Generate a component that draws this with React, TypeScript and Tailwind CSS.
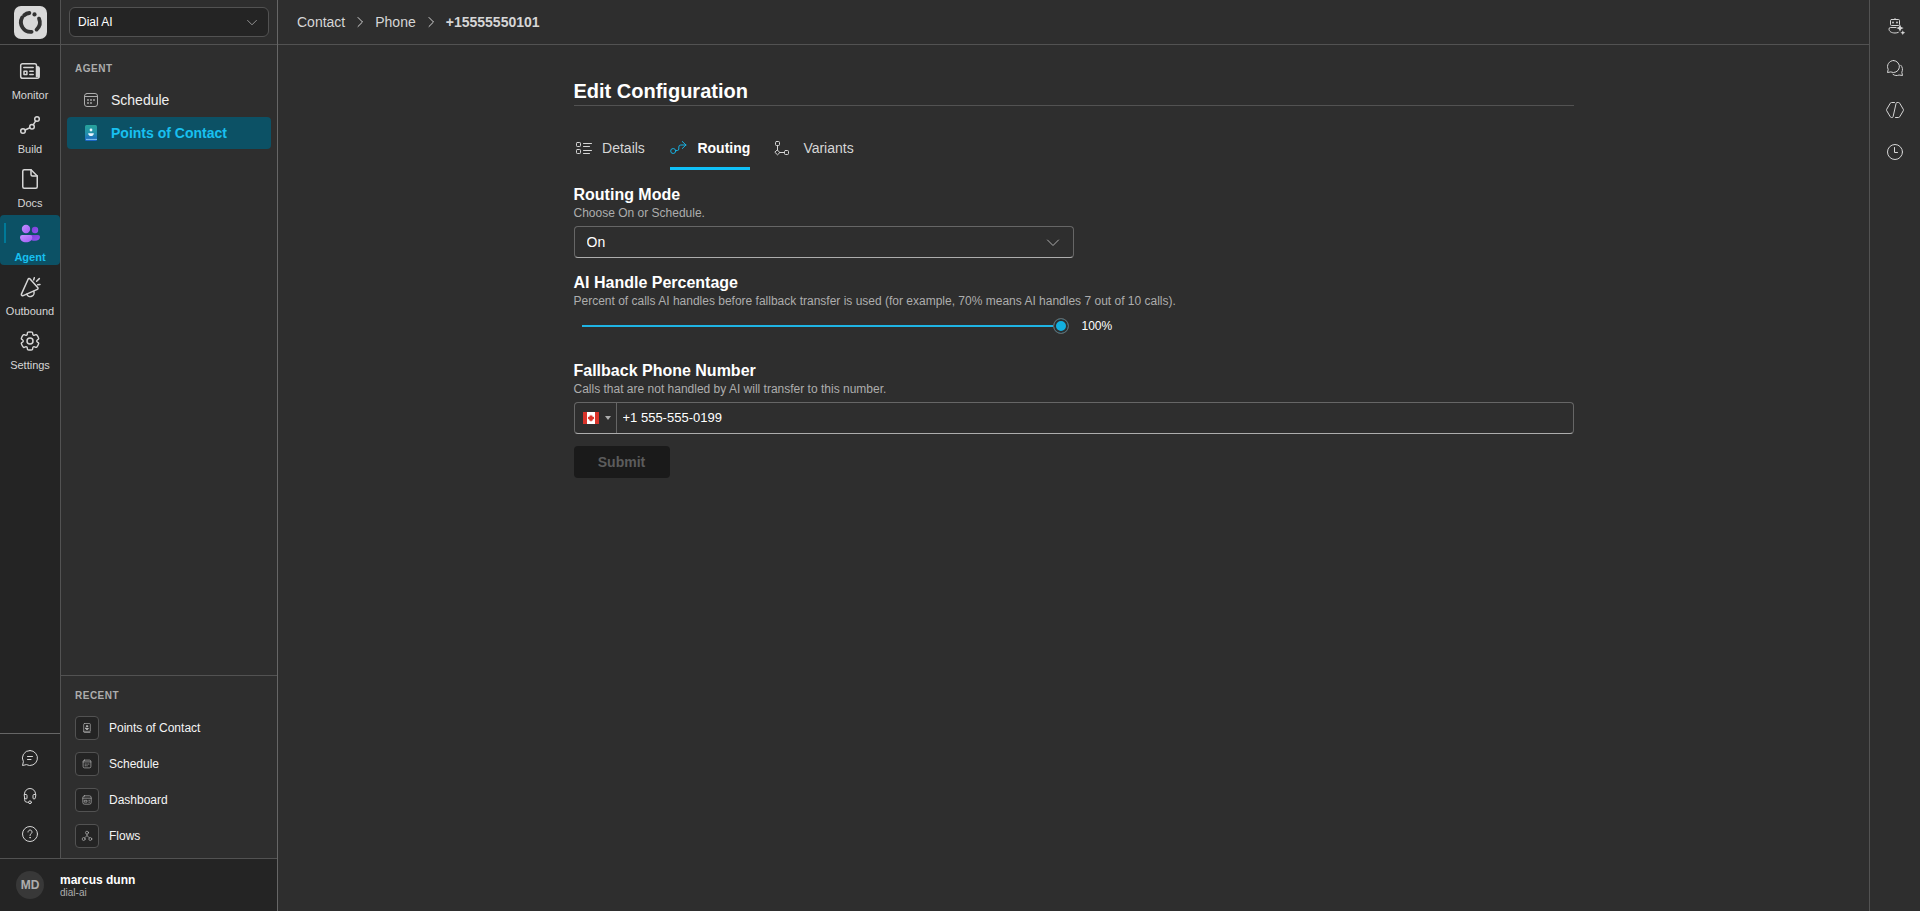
import { useState } from 'react';
import type { ReactNode } from 'react';

interface IconProps {
  className?: string;
}

interface SvgProps extends IconProps {
  box?: number;
  stroke?: number;
  children: ReactNode;
}

function Svg({ className, box = 20, stroke = 1, children }: SvgProps) {
  return (
    <svg
      className={className}
      viewBox={`0 0 ${box} ${box}`}
      fill="none"
      stroke="currentColor"
      strokeWidth={stroke}
      strokeLinecap="round"
      strokeLinejoin="round"
      aria-hidden="true"
    >
      {children}
    </svg>
  );
}

const Logo = ({ className }: IconProps) => (
  <svg className={className} viewBox="0 0 33 33" fill="none" aria-hidden="true">
    <rect width="33" height="33" rx="7" fill="#d9d9d9" />
    <g stroke="#333" strokeWidth="3.8" strokeLinecap="round">
      <path d="M15.4 7A9.7 9.7 0 0 0 10.2 9.2" />
      <path d="M8.2 11.4A9.7 9.7 0 0 0 17.6 25.8" />
      <path d="M25 12.600A9.700 9.700 0 0 1 22.600 23.600" />
    </g>
    <circle cx="20.5" cy="8.4" r="2.1" fill="#333" />
  </svg>
);

const ChevronDown = ({ className }: IconProps) => (
  <Svg className={className}>
    <path d="M4.5 8 10 13.5 15.5 8" />
  </Svg>
);

const ChevronRight = ({ className }: IconProps) => (
  <Svg className={className}>
    <path d="M8 5.500 12.500 10 8 14.500" />
  </Svg>
);

const MonitorIcon = ({ className }: IconProps) => (
  <Svg className={className} box={24} stroke={1.5}>
    <path d="M18.5 17.5V6.2a1.7 1.7 0 0 0-1.7-1.5H4.5a1.8 1.8 0 0 0-1.8 1.8v10.9a2 2 0 0 0 2 1.9h14.5a2 2 0 0 0 2-2V9.3a1.5 1.5 0 0 0-1.3-1.5v9.7" />
    <path d="M5.8 8.5h9.4M11.8 12.2h3.4M11.8 15.5h3.4M6 12.2h2.9v3.3H6z" />
  </Svg>
);

const BuildIcon = ({ className }: IconProps) => (
  <Svg className={className} box={24} stroke={1.5}>
    <circle cx="5" cy="18" r="2.3" />
    <circle cx="14" cy="13.8" r="2.3" />
    <circle cx="19" cy="6" r="2.3" />
    <path d="m7.1 17 4.8-2.2M15.2 11.8l2.5-3.9" />
  </Svg>
);

const DocsIcon = ({ className }: IconProps) => (
  <Svg className={className} box={24} stroke={1.5}>
    <path d="M13 2.75H6.25a1.5 1.5 0 0 0-1.5 1.5v15.5a1.5 1.5 0 0 0 1.5 1.5h11.5a1.5 1.5 0 0 0 1.5-1.5V9z" />
    <path d="M13 2.75V7.5A1.5 1.5 0 0 0 14.5 9h4.75" />
  </Svg>
);

const AgentIcon = ({ className }: IconProps) => (
  <svg className={className} viewBox="0 0 24 24" aria-hidden="true">
    <defs>
      <linearGradient id="people-front" x1="0" y1="0" x2="1" y2="1">
        <stop offset="0" stopColor="#c490ff" />
        <stop offset="1" stopColor="#a25cf5" />
      </linearGradient>
      <linearGradient id="people-back" x1="0" y1="0" x2="1" y2="1">
        <stop offset="0" stopColor="#7a3fd6" />
        <stop offset="1" stopColor="#9455f5" />
      </linearGradient>
    </defs>
    <circle cx="17" cy="9" r="3.2" fill="url(#people-back)" />
    <path d="M12 14h8a2 2 0 0 1 2 2c0 2.4-2.2 3.8-5 3.8S12 19 12 17z" fill="url(#people-back)" />
    <circle cx="8" cy="8" r="4.2" fill="url(#people-front)" />
    <path d="M4.2 14h7.9a2.2 2.2 0 0 1 2.2 2.2c0 3-2.8 5-6.2 5s-6.1-2-6.1-5A2.2 2.2 0 0 1 4.2 14z" fill="url(#people-front)" />
  </svg>
);

const OutboundIcon = ({ className }: IconProps) => (
  <Svg className={className} box={24} stroke={1.5}>
    <path d="M10.1 4.2a1.2 1.2 0 0 1 2-.3l7.6 8.6a1.2 1.2 0 0 1-.4 1.9L5.2 20.6a1.3 1.3 0 0 1-1.8-1.5z" />
    <path d="M8.8 19.2a3.6 3.6 0 0 0 7-2.8" />
    <path d="m16.3 2.7-.6 2.2M21.3 3.6 18.6 6.3M22 9.4l-2.3.4" />
  </Svg>
);

const SettingsIcon = ({ className }: IconProps) => (
  <Svg className={className} box={24} stroke={1.5}>
    <path
      transform="translate(.84 .84) scale(.93)"
      d="M12.01 2.25c.74 0 1.47.1 2.18.25.32.07.55.33.59.65l.17 1.53a1.38 1.38 0 0 0 1.92 1.11l1.4-.61c.3-.13.64-.06.85.17a9.8 9.8 0 0 1 2.2 3.8c.1.3 0 .63-.26.82l-1.25.92a1.38 1.38 0 0 0 0 2.22l1.25.92c.26.19.36.52.27.82a9.8 9.8 0 0 1-2.2 3.8.75.75 0 0 1-.85.17l-1.4-.62a1.38 1.38 0 0 0-1.93 1.12l-.17 1.52a.75.75 0 0 1-.58.65 9.52 9.52 0 0 1-4.4 0 .75.75 0 0 1-.57-.65l-.17-1.52a1.38 1.38 0 0 0-1.93-1.11l-1.4.62a.75.75 0 0 1-.85-.18 9.8 9.8 0 0 1-2.2-3.8c-.1-.3 0-.63.26-.82l1.25-.92a1.38 1.38 0 0 0 0-2.22l-1.24-.92a.75.75 0 0 1-.28-.82 9.8 9.8 0 0 1 2.2-3.8c.23-.23.57-.3.86-.17l1.4.62a1.38 1.38 0 0 0 1.93-1.12l.17-1.53a.75.75 0 0 1 .58-.65c.72-.16 1.45-.24 2.2-.25z"
    />
    <circle cx="12" cy="12" r="3" />
  </Svg>
);

const ChatIcon = ({ className }: IconProps) => (
  <Svg className={className}>
    <path d="M10 2.5a7.5 7.5 0 1 1-3.6 14.1l-3.9.9.9-3.8A7.5 7.5 0 0 1 10 2.5zM7.5 8.5h5M7.5 11.5h3.5" />
  </Svg>
);

const HeadsetIcon = ({ className }: IconProps) => (
  <Svg className={className}>
    <path d="M4.5 8.5V8a5.5 5.5 0 0 1 11 0v.5" />
    <path d="M4.5 8.500H6a1 1 0 0 1 1 1V12a1 1 0 0 1-1 1 1.500 1.500 0 0 1-1.500-1.500zM15.500 8.500H14a1 1 0 0 0-1 1V12a1 1 0 0 0 1 1 1.500 1.500 0 0 0 1.500-1.500z" />
    <path d="M4.500 11.500v2a2.800 2.800 0 0 0 2.800 2.800h1.200" />
    <circle cx="10" cy="16.300" r="1.400" />
  </Svg>
);

const HelpIcon = ({ className }: IconProps) => (
  <Svg className={className}>
    <circle cx="10" cy="10" r="7.5" />
    <path d="M8 8a2 2 0 1 1 3.3 1.5c-.8.6-1.3 1.1-1.3 2" />
    <circle cx="10" cy="13.7" r=".3" />
  </Svg>
);

const CalendarIcon = ({ className }: IconProps) => (
  <Svg className={className}>
    <rect x="3.5" y="3.5" width="13" height="13" rx="2.5" />
    <path d="M3.5 6.5h13" />
    <g fill="currentColor" stroke="none">
      <circle cx="7" cy="10" r=".9" />
      <circle cx="10" cy="10" r=".9" />
      <circle cx="13" cy="10" r=".9" />
      <circle cx="7" cy="13" r=".9" />
      <circle cx="10" cy="13" r=".9" />
    </g>
  </Svg>
);

const ContactIcon = ({ className }: IconProps) => (
  <Svg className={className}>
    <path d="M6 2.5h8A1.5 1.5 0 0 1 15.5 4v11.5h-11M6 2.5A1.5 1.5 0 0 0 4.5 4v12A1.5 1.5 0 0 0 6 17.5h9" />
    <circle cx="10" cy="7" r="1.3" fill="currentColor" />
    <path d="M7.5 10.5h5c0 1.3-1 2-2.5 2s-2.5-.7-2.5-2z" fill="currentColor" />
  </Svg>
);

const ContactColorIcon = ({ className }: IconProps) => (
  <svg className={className} viewBox="0 0 20 20" aria-hidden="true">
    <defs>
      <linearGradient id="contact-fill" x1="0" y1="0" x2="0" y2="1">
        <stop offset="0" stopColor="#27a39b" />
        <stop offset=".5" stopColor="#2391ab" />
        <stop offset="1" stopColor="#1a63c6" />
      </linearGradient>
    </defs>
    <rect x="4" y="2" width="12" height="16" rx="1.5" fill="url(#contact-fill)" />
    <circle cx="10" cy="7" r="1.4" fill="#e8f6ff" />
    <path d="M7.2 10.2h5.6c0 1.9-1.2 2.8-2.8 2.8s-2.8-.9-2.8-2.8z" fill="#e8f6ff" />
    <path d="M5 15.9h11v.9H5z" fill="#8fd0f5" />
  </svg>
);

const DashboardIcon = ({ className }: IconProps) => (
  <Svg className={className}>
    <rect x="3" y="3" width="14" height="14" rx="3" />
    <path d="M3 7h14M6 10.5h4v3H6zM13 10.5h1.5M13 13.5h1.5" />
  </Svg>
);

const FlowIcon = ({ className }: IconProps) => (
  <Svg className={className}>
    <circle cx="10" cy="4.5" r="2.5" />
    <circle cx="4.5" cy="15" r="2.5" />
    <circle cx="15.5" cy="15" r="2.5" />
    <path d="M10 7v2.5M6 13l4-3.5 4 3.5" />
  </Svg>
);

const DetailsIcon = ({ className }: IconProps) => (
  <Svg className={className}>
    <rect x="2.5" y="4.5" width="4" height="4" rx=".8" />
    <rect x="2.5" y="11.5" width="4" height="4" rx=".8" />
    <path d="M9.5 5.500h8M9.500 8.500h6M9.500 12.500h8M9.500 15.500h6" />
  </Svg>
);

const RoutingIcon = ({ className }: IconProps) => (
  <Svg className={className}>
    <circle cx="3.2" cy="13" r="2.5" />
    <path d="M5.8 12.5h1.5A1.5 1.5 0 0 0 8.8 11V9a2 2 0 0 1 2-2H16M12.3 3.5 16 7l-3.7 3.5" />
  </Svg>
);

const VariantsIcon = ({ className }: IconProps) => (
  <Svg className={className}>
    <rect x="1.5" y="3.5" width="4" height="4" rx="1" />
    <rect x="10.5" y="12.5" width="4" height="4" rx="1" />
    <path d="M3.5 7.5v4.7M3.5 12.2 5.9 14.5 3.5 16.8 1.1 14.5zM5.9 14.5h4.6" />
  </Svg>
);

const BotIcon = ({ className }: IconProps) => (
  <Svg className={className}>
    <rect x="5.5" y="3.500" width="9" height="6" rx="1" />
    <path d="M10 3.500v-1M11 11.500H5.500A1.500 1.500 0 0 0 4 13c0 2.500 2.500 4 6 4 1.300 0 2.500-.2 3.300-.6" />
    <g fill="currentColor" stroke="none">
      <circle cx="8" cy="6.500" r=".9" />
      <circle cx="12" cy="6.500" r=".9" />
      <path d="m15 8.500 1.100 2.500 2.500 1.100-2.500 1.100-1.100 2.500-1.100-2.500-2.500-1.100 2.500-1.100zM17.800 14.300l.7 1.700 1.700.7-1.700.7-.7 1.700-.7-1.700-1.700-.7 1.700-.7z" />
    </g>
  </Svg>
);

const ChatsIcon = ({ className }: IconProps) => (
  <Svg className={className}>
    <path d="M8.5 2.5a6 6 0 1 1-2.7 11.4l-3.3.6.7-3.2A6 6 0 0 1 8.500 2.500z" />
    <path d="M8 16.4c1.7 1.3 4 1.5 6 .6l3.5.5-.7-3.2c1.2-2.5.8-5.3-1-7.1" />
  </Svg>
);

const CodeIcon = ({ className }: IconProps) => (
  <Svg className={className}>
    <path d="M9.500 2.500H6.600a1.500 1.500 0 0 0-1.300.7L1.700 9.300a1.500 1.500 0 0 0 0 1.400l3.600 6.100c.3.500.8.700 1.300.7h.5c.5 0 .9-.3 1-.8l3-13.400c.1-.5.5-.8 1-.8h1.300c.5 0 1 .2 1.300.7l3.600 6.100c.3.400.3 1 0 1.400l-3.600 6.100c-.3.500-.8.700-1.300.7h-2.900" />
  </Svg>
);

const ClockIcon = ({ className }: IconProps) => (
  <Svg className={className}>
    <circle cx="10" cy="10" r="7.5" />
    <path d="M9.5 5.5v5h3" />
  </Svg>
);

const CanadaFlag = ({ className }: IconProps) => (
  <svg className={className} viewBox="0 0 16 12" aria-hidden="true">
    <path fill="#fff" d="M0 0h16v12H0z" />
    <path
      fill="#d8332a"
      d="M0 0h4v12H0zM12 0h4v12h-4zM8 2.5l.8 1.4.9-.3-.2 1.5 1.7-.3-.4 1.2.5.6-2 1.5.2.9-1.3-.2V10h-.4V8.8l-1.3.2.2-.9-2-1.5.5-.6-.4-1.2 1.7.3-.2-1.5.9.3z"
    />
  </svg>
);

const railItems = [
  { label: 'Monitor', icon: MonitorIcon, active: false },
  { label: 'Build', icon: BuildIcon, active: false },
  { label: 'Docs', icon: DocsIcon, active: false },
  { label: 'Agent', icon: AgentIcon, active: true },
  { label: 'Outbound', icon: OutboundIcon, active: false },
  { label: 'Settings', icon: SettingsIcon, active: false },
];

const railTools = [
  { label: 'Feedback', icon: ChatIcon },
  { label: 'Support', icon: HeadsetIcon },
  { label: 'Help', icon: HelpIcon },
];

const recentItems = [
  { label: 'Points of Contact', icon: ContactIcon },
  { label: 'Schedule', icon: CalendarIcon },
  { label: 'Dashboard', icon: DashboardIcon },
  { label: 'Flows', icon: FlowIcon },
];

const sideTools = [
  { label: 'Assistant', icon: BotIcon },
  { label: 'Conversations', icon: ChatsIcon },
  { label: 'Developer', icon: CodeIcon },
  { label: 'History', icon: ClockIcon },
];

const tabs = [
  { id: 'details', label: 'Details', icon: DetailsIcon },
  { id: 'routing', label: 'Routing', icon: RoutingIcon },
  { id: 'variants', label: 'Variants', icon: VariantsIcon },
];

function Rail() {
  return (
    <nav className="flex w-[61px] shrink-0 flex-col border-r border-[#525252] bg-[#242424]" aria-label="Main">
      <div className="flex h-[45px] shrink-0 items-center justify-center border-b border-[#525252]">
        <Logo className="size-[33px]" />
      </div>
      <div className="flex flex-col gap-1 py-2">
        {railItems.map(({ label, icon: Icon, active }) => (
          <a
            key={label}
            href="#"
            className={
              active
                ? 'relative flex flex-col items-center gap-1 rounded bg-[#0c5165] pt-1.5 font-bold text-[#18c0f0]'
                : 'relative flex flex-col items-center gap-1 rounded pt-1.5 text-[#d6d6d6]'
            }
          >
            {active && <span className="absolute top-2 left-1 h-5 w-0.5 bg-[#007a99]" />}
            <Icon className="size-6" />
            <span className="text-[11px] leading-4">{label}</span>
          </a>
        ))}
      </div>
      <div className="mt-auto flex flex-col items-center gap-1.5 border-t border-[#666] py-2">
        {railTools.map(({ label, icon: Icon }) => (
          <button key={label} type="button" aria-label={label} className="flex size-8 items-center justify-center text-[#d6d6d6]">
            <Icon className="size-5" />
          </button>
        ))}
      </div>
    </nav>
  );
}

function SidePanel() {
  return (
    <div className="flex min-w-0 flex-1 flex-col">
      <div className="flex h-[45px] shrink-0 items-center border-b border-[#525252] px-2">
        <div className="relative w-full">
          <select
            aria-label="Workspace"
            className="block h-[30px] w-full appearance-none rounded-md border border-[#525252] bg-[#242424] pr-7 pl-2 text-xs text-white"
          >
            <option>Dial AI</option>
          </select>
          <ChevronDown className="pointer-events-none absolute top-[7px] right-[9px] size-4 text-[#adadad]" />
        </div>
      </div>

      <nav className="px-1.5" aria-label="Agent">
        <h2 className="px-2 pt-4 pb-2 text-[10px] leading-[15px] font-bold tracking-wider text-[#adadad]">AGENT</h2>
        <a href="#" className="flex h-8 items-center gap-2.5 rounded px-3.5 text-sm text-[#f0f0f0]">
          <CalendarIcon className="size-5 text-[#adadad]" />
          Schedule
        </a>
        <a href="#" className="mt-px flex h-8 items-center gap-2.5 rounded bg-[#0c5165] px-3.5 text-sm font-bold text-[#18c0f0]">
          <ContactColorIcon className="size-5" />
          Points of Contact
        </a>
      </nav>

      <section className="mt-auto border-t border-[#525252] px-3.5 pb-1">
        <h2 className="pt-3.5 pb-2 text-[10px] leading-3 font-bold tracking-wider text-[#adadad]">RECENT</h2>
        {recentItems.map(({ label, icon: Icon }) => (
          <a key={label} href="#" className="flex h-9 items-center gap-2.5 text-xs text-[#f5f5f5]">
            <span className="flex size-6 items-center justify-center rounded border border-[#525252] bg-[#242424]">
              <Icon className="size-3 text-[#c8c8c8]" />
            </span>
            {label}
          </a>
        ))}
      </section>
    </div>
  );
}

function Sidebar() {
  return (
    <aside className="flex w-[278px] shrink-0 flex-col border-r border-[#666]">
      <div className="flex flex-1">
        <Rail />
        <SidePanel />
      </div>
      <div className="flex h-[53px] items-center gap-4 border-t border-[#525252] bg-[#242424] px-4">
        <span className="flex size-7 items-center justify-center rounded-full bg-[#383838] text-xs font-bold text-[#adadad]">MD</span>
        <div>
          <p className="text-xs leading-4 font-bold text-white">marcus dunn</p>
          <p className="text-[10px] leading-[10px] text-[#adadad]">dial-ai</p>
        </div>
      </div>
    </aside>
  );
}

interface FieldProps {
  id: string;
  label: string;
  hint: string;
  children: ReactNode;
}

function Field({ id, label, hint, children }: FieldProps) {
  return (
    <div>
      <label htmlFor={id} className="block pt-0.5 text-base leading-[22px] font-bold text-white">
        {label}
      </label>
      <p className="mb-1.5 text-xs leading-[14px] text-[#adadad]">{hint}</p>
      {children}
    </div>
  );
}

function RoutingForm() {
  const [percent, setPercent] = useState(100);
  const [phone, setPhone] = useState('+1 555-555-0199');

  return (
    <form className="mt-3 flex flex-col gap-3">
      <Field id="routing-mode" label="Routing Mode" hint="Choose On or Schedule.">
        <div className="relative w-1/2">
          <select
            id="routing-mode"
            className="block h-8 w-full appearance-none rounded border border-[#666] border-b-[#adadad] bg-[#2e2e2e] px-3 text-sm text-white"
          >
            <option>On</option>
            <option>Schedule</option>
          </select>
          <ChevronDown className="pointer-events-none absolute top-1.5 right-[11px] size-5 text-[#adadad]" />
        </div>
      </Field>

      <Field
        id="handle-percent"
        label="AI Handle Percentage"
        hint="Percent of calls AI handles before fallback transfer is used (for example, 70% means AI handles 7 out of 10 calls)."
      >
        <div className="mb-2 flex h-6 items-center gap-[13px]">
          <input
            id="handle-percent"
            type="range"
            min={0}
            max={100}
            value={percent}
            onChange={(e) => setPercent(Number(e.target.value))}
            style={{
              backgroundImage: `linear-gradient(to right, #1fb4e4 ${percent}%, #adadad ${percent}%)`,
            }}
            className="h-4 w-[495px] appearance-none border-x-8 border-transparent bg-[length:100%_2px] bg-center bg-no-repeat [background-clip:padding-box] [background-origin:padding-box] [&::-webkit-slider-runnable-track]:-mx-2 [&::-webkit-slider-thumb]:size-4 [&::-webkit-slider-thumb]:appearance-none [&::-webkit-slider-thumb]:rounded-full [&::-webkit-slider-thumb]:border [&::-webkit-slider-thumb]:border-[#666] [&::-webkit-slider-thumb]:bg-[#12b0e0] [&::-webkit-slider-thumb]:shadow-[inset_0_0_0_2px_#2e2e2e]"
          />
          <output htmlFor="handle-percent" className="text-xs text-white">
            {percent}%
          </output>
        </div>
      </Field>

      <Field
        id="fallback-phone"
        label="Fallback Phone Number"
        hint="Calls that are not handled by AI will transfer to this number."
      >
        <div className="flex h-8 rounded border border-[#666] border-b-[#adadad]">
          <button type="button" aria-label="Country: Canada" className="flex w-[42px] items-center gap-1.5 border-r border-[#666] pl-2">
            <CanadaFlag className="h-3 w-4" />
            <svg viewBox="0 0 6 4" className="h-1 w-1.5 text-[#adadad]" fill="currentColor" aria-hidden="true">
              <path d="M0 0h6L3 4z" />
            </svg>
          </button>
          <input
            id="fallback-phone"
            type="tel"
            value={phone}
            onChange={(e) => setPhone(e.target.value)}
            className="min-w-0 flex-1 bg-transparent px-1.5 text-[13px] text-white outline-none"
          />
        </div>
      </Field>

      <button type="submit" disabled className="h-8 w-24 rounded bg-[#1a1a1a] text-sm font-bold text-[#5c5c5c]">
        Submit
      </button>
    </form>
  );
}

export default function App() {
  const [activeTab, setActiveTab] = useState('routing');

  return (
    <div className="flex min-h-screen bg-[#2e2e2e] font-['Liberation_Sans',Arial,sans-serif] text-white">
      <Sidebar />

      <div className="flex min-w-0 flex-1 flex-col">
        <header className="flex h-[45px] items-center border-b border-[#525252] pl-[19px] text-sm text-[#d6d6d6]">
          <a href="#">Contact</a>
          <ChevronRight className="mx-[5px] size-5" />
          <a href="#">Phone</a>
          <ChevronRight className="mx-[5px] size-5" />
          <span className="font-bold">+15555550101</span>
        </header>

        <main className="mx-auto w-full max-w-[1000px] pt-8">
          <h1 className="border-b border-[#525252] text-xl leading-7 font-bold">Edit Configuration</h1>

          {/* Tabs */}
          <div role="tablist" className="mt-5 flex gap-6">
            {tabs.map(({ id, label, icon: Icon }) => {
              const selected = id === activeTab;
              return (
                <button
                  key={id}
                  type="button"
                  role="tab"
                  aria-selected={selected}
                  onClick={() => setActiveTab(id)}
                  className={
                    selected
                      ? 'relative flex h-11 items-center gap-[7px] text-sm font-bold text-white'
                      : 'relative flex h-11 items-center gap-[7px] text-sm text-[#d6d6d6]'
                  }
                >
                  <Icon className={selected ? 'size-5 text-[#18b0e0]' : 'size-5'} />
                  {/* the ::after copy keeps room for the bold label */}
                  <span
                    data-label={label}
                    className="flex flex-col items-center after:invisible after:h-0 after:overflow-hidden after:font-bold after:content-[attr(data-label)]"
                  >
                    {label}
                  </span>
                  {selected && <span className="absolute inset-x-0 bottom-0 h-[3px] bg-[#10c0f8]" />}
                </button>
              );
            })}
          </div>

          <RoutingForm />
        </main>
      </div>

      {/* Right tool bar */}
      <aside className="flex w-[51px] shrink-0 flex-col items-center gap-2.5 border-l border-[#525252] pt-2.5">
        {sideTools.map(({ label, icon: Icon }) => (
          <button key={label} type="button" aria-label={label} className="flex size-8 items-center justify-center text-[#d6d6d6]">
            <Icon className="size-5" />
          </button>
        ))}
      </aside>
    </div>
  );
}
